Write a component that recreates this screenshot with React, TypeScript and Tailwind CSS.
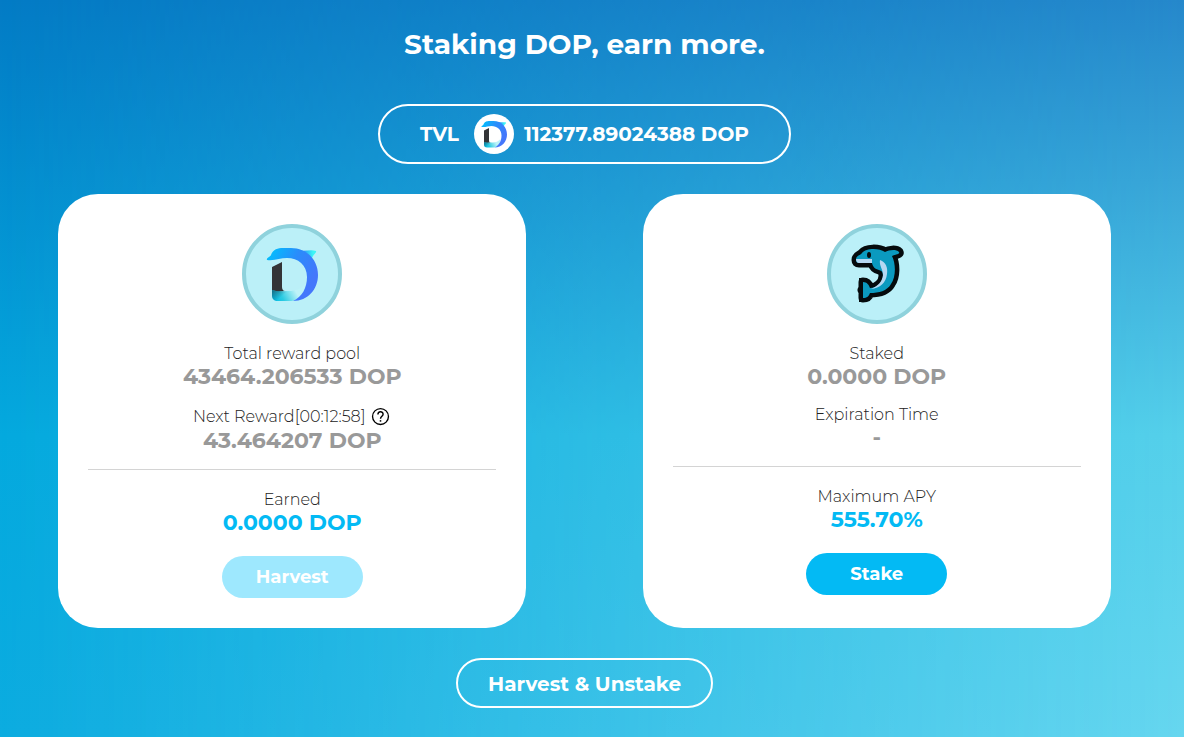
import React from 'react';
import { clsx } from 'clsx';

const LogoMark: React.FC<{ className?: string }> = ({ className }) => (
  <svg viewBox="0 0 120 120" className={className} aria-hidden="true">
    <defs>
      <linearGradient id="arc" x1="36" y1="42" x2="80" y2="66" gradientUnits="userSpaceOnUse">
        <stop offset="0" stopColor="#04bdfd" />
        <stop offset="0.5" stopColor="#2a8cfb" />
        <stop offset="1" stopColor="#4477fb" />
      </linearGradient>
      <linearGradient id="fin" x1="72" y1="38" x2="81" y2="38" gradientUnits="userSpaceOnUse">
        <stop offset="0" stopColor="#2b9dfb" />
        <stop offset="1" stopColor="#3df5f5" />
      </linearGradient>
      <linearGradient id="foot" x1="42" y1="85" x2="62" y2="74" gradientUnits="userSpaceOnUse">
        <stop offset="0" stopColor="#06bfe6" />
        <stop offset="0.35" stopColor="#2ccbe2" />
        <stop offset="1" stopColor="#bdf3f8" />
      </linearGradient>
      <linearGradient id="shade" x1="40" y1="75" x2="48" y2="84" gradientUnits="userSpaceOnUse">
        <stop offset="0" stopColor="#16647a" />
        <stop offset="1" stopColor="#16647a" stopOpacity="0" />
      </linearGradient>
    </defs>
    <path d="M40 53 L50 48 V73 C50 75 51 77 53 77 L40 79 Z" fill="#333437" />
    <path d="M40 76 C45 78 51 77 57 77 C63 77 69 75 73 70 C73 79 67 86 60 87 H46 C42 87 40 85 40 81 Z" fill="url(#foot)" />
    <path d="M40 76 C45 78 51 77 57 77 C63 77 69 75 73 70 C73 79 67 86 60 87 H46 C42 87 40 85 40 81 Z" fill="url(#shade)" />
    <path d="M66 36 C72 38 79 35 84 37 C85 39 80 41 80 45 Z" fill="url(#fin)" />
    <path
      d="M35 46 C34 44 38 43 39 41 C41 35 46 34 51 34 H59 C75 34 86 46 86 61 C86 75 76 87 61 87 C70 83 75 74 75 63 C75 51 66 44 55 44 C48 44 43 47 35 46 Z"
      fill="url(#arc)"
    />
  </svg>
);

const DolphinMark: React.FC<{ className?: string }> = ({ className }) => (
  <svg viewBox="0 0 120 120" className={className} aria-hidden="true">
    <path
      d="M39 46 C39 41 43 42 45 39 C49 34 62 34 68 38 C72 36 79 35 82 38 C83 40 80 40 75 42 C79 50 79 63 74 70 C70 77 62 79 53 79 C52 82 50 84 46 84 V78 L45 76 L46 74 V68 C50 68 52 71 53 74 C60 74 66 68 66 62 C66 58 65 57 62 56 C58 55 56 53 55 49 H42 C40 49 39 48 39 46 Z"
      fill="#0b9abf"
      stroke="#050b0d"
      strokeWidth="9"
      strokeLinejoin="round"
      paintOrder="stroke"
    />
    {/* squared-off edge of the tail */}
    <path d="M42 64 H46 V88 H42 Z" fill="#050b0d" />
    <path d="M39 45 H55 V49 H42 C40 49 39 47 39 45 Z" fill="#b5d8f2" />
    <path d="M63 46 C69 48 71 54 70 60 C69 69 63 74 54 75 C61 72 65 68 66 61 C66 55 62 52 63 46 Z" fill="#b5d8f2" />
    <ellipse cx="52" cy="41" rx="2" ry="3" fill="#050b0d" />
  </svg>
);

const HelpIcon: React.FC = () => (
  <svg viewBox="0 0 24 24" className="ml-[3px] size-[23px]" fill="none" stroke="black" role="img" aria-label="Help">
    <circle cx="12" cy="12" r="8.3" strokeWidth="1.4" />
    <path d="M9.3 10 C9.3 6.2 14.7 6.2 14.7 9.6 C14.7 11.6 12 12 12 14.4" strokeWidth="1.5" />
    <path d="M12 15.8 V17.4" strokeWidth="1.6" />
  </svg>
);

const Badge: React.FC<{ children: React.ReactNode }> = ({ children }) => (
  <div className="mb-5 flex size-[100px] items-center justify-center rounded-full border-4 border-[#8fd2dc] bg-[#bbf0f8]">
    {children}
  </div>
);

interface StatProps {
  label: React.ReactNode;
  value: string;
  highlight?: boolean;
}

const Stat: React.FC<StatProps> = ({ label, value, highlight }) => (
  <div className="text-center">
    <div className="flex min-h-5 items-center justify-center text-base leading-5 font-light text-[#222222]">{label}</div>
    <div className={clsx('text-[22px] leading-[26px] font-bold', highlight ? 'text-[#03baf4]' : 'text-[#999999]')}>
      {value}
    </div>
  </div>
);

const Divider: React.FC = () => <hr className="mt-[15px] mb-5 w-full border-[#d4d4d4]" />;

const Card: React.FC<{ children: React.ReactNode }> = ({ children }) => (
  <div className="flex flex-1 justify-center">
    <section className="flex w-4/5 flex-col items-center rounded-[40px] bg-white p-[30px]">{children}</section>
  </div>
);

const App: React.FC = () => {
  return (
    <main className="relative min-h-screen bg-[linear-gradient(to_bottom,#037bc5_0%,#04a9de_59%,#0cace0_100%)] pr-[15px] font-[Montserrat,Inter,sans-serif]">
      {/* lighter wash that fades in towards the right edge */}
      <div className="absolute inset-0 bg-[linear-gradient(to_bottom,#2588cb_0%,#55d0ea_59%,#66d6ef_100%)] mask-[linear-gradient(to_right,transparent,black)]" />

      <div className="relative flex flex-col items-center pt-6 pb-7">
        <h1 className="text-[28px] leading-10 font-bold text-white">Staking DOP, earn more.</h1>

        <div className="mt-10 flex h-[60px] items-center rounded-full border-2 border-white px-10 text-xl font-bold text-white">
          <span>TVL</span>
          <span className="mr-2.5 ml-[15px] flex size-10 items-center justify-center rounded-full bg-white">
            <LogoMark className="size-15 shrink-0" />
          </span>
          <span>112377.89024388 DOP</span>
        </div>

        <div className="mt-[30px] flex w-full">
          <Card>
            <Badge>
              <LogoMark className="size-[120px] shrink-0" />
            </Badge>
            <Stat label="Total reward pool" value="43464.206533 DOP" />
            <div className="mt-[15px]">
              <Stat
                label={
                  <>
                    Next Reward[00:12:58]
                    <HelpIcon />
                  </>
                }
                value="43.464207 DOP"
              />
            </div>
            <Divider />
            <Stat label="Earned" value="0.0000 DOP" highlight />
            <button disabled className="mt-5 h-[42px] w-[141px] rounded-full bg-[#9ee8fe] text-lg font-bold text-white">
              Harvest
            </button>
          </Card>

          <Card>
            <Badge>
              <DolphinMark className="size-[120px] shrink-0" />
            </Badge>
            <Stat label="Staked" value="0.0000 DOP" />
            <div className="mt-[15px]">
              <Stat label="Expiration Time" value="-" />
            </div>
            <Divider />
            <Stat label="Maximum APY" value="555.70%" highlight />
            <button className="mt-5 h-[42px] w-[141px] rounded-full bg-[#03baf4] text-lg font-bold text-white">
              Stake
            </button>
          </Card>
        </div>

        <button className="mt-[30px] h-[50px] rounded-full border-2 border-white px-[30px] pt-0.5 text-xl font-bold text-white">
          Harvest &amp; Unstake
        </button>
      </div>
    </main>
  );
};

export default App;
